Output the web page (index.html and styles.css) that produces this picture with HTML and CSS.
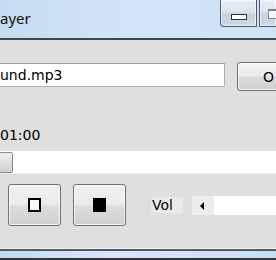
FILE: index.html
```html
<!DOCTYPE html>
<html>
<head>
<meta charset="utf-8">
<link rel="stylesheet" href="styles.css">
</head>
<body>
<div class="window">
  <div class="titlebar">
    <span class="title">ayer</span>
    <div class="caption">
      <div class="cbtn cbtn-min"><span class="glyph-min"></span></div>
      <div class="cbtn cbtn-max"><span class="glyph-max"></span></div>
    </div>
  </div>
  <div class="client">
    <div class="file-row">
      <div class="textbox">und.mp3</div>
      <div class="btn btn-open">O</div>
    </div>
    <div class="time">01:00</div>
    <div class="seek"><div class="thumb"></div></div>
    <div class="controls">
      <div class="btn btn-ctl"><span class="sq-hollow"></span></div>
      <div class="btn btn-ctl"><span class="sq-filled"></span></div>
      <span class="vol-label">Vol</span>
      <div class="vol">
        <div class="vol-arrow"><svg width="5" height="8" viewBox="0 0 5 8"><path d="M4 0 L0 4 L4 8 Z" fill="#000"/></svg></div>
      </div>
    </div>
  </div>
  <div class="frame-bottom"></div>
</div>
</body>
</html>
```
FILE: styles.css
```css
html, body {
  margin: 0;
  padding: 0;
  width: 276px;
  height: 260px;
  overflow: hidden;
  background: #dfdfdf;
}
.window {
  width: 276px;
  height: 260px;
  display: flex;
  flex-direction: column;
  overflow: hidden;
  font-family: "DejaVu Sans", sans-serif;
  font-size: 14px;
  color: #000;
}
.titlebar {
  height: 38px;
  flex: none;
  display: flex;
  justify-content: space-between;
  background: linear-gradient(90deg, #c7dcf2 0%, #d3e5f8 50%, #cfe2f6 100%);
  border-bottom: 2px solid #3e4650;
}
.title {
  font-family: "Noto Sans", "Open Sans", sans-serif;
  font-size: 15px;
  line-height: 20px;
  padding-top: 8px;
  color: #111;
}
.caption {
  display: flex;
  align-items: flex-start;
  gap: 2px;
  flex: none;
}
.cbtn {
  height: 27px;
  box-sizing: border-box;
  border: 1px solid #4e5a68;
  border-top: none;
  background: linear-gradient(180deg, #e6edf5 0%, #dce5ef 45%, #c6d2df 55%, #ccd8e5 100%);
  box-shadow: inset 0 0 0 1px rgba(255,255,255,0.6);
  display: flex;
  align-items: flex-start;
  justify-content: center;
  flex: none;
}
.cbtn-min {
  width: 37px;
  border-bottom-left-radius: 4px;
}
.cbtn-max {
  width: 17px;
  justify-content: flex-start;
  padding-left: 8px;
  border-right: none;
}
.glyph-min {
  margin-top: 14px;
  width: 14px;
  height: 4px;
  border: 1px solid #2a3440;
  background: #fff;
}
.glyph-max {
  margin-top: 9px;
  width: 10px;
  height: 7px;
  flex: none;
  border: 1px solid #7a8694;
  border-top-width: 2px;
  background: #f4f7fa;
}
.client {
  flex: 1;
  background: #dfdfdf;
  display: flex;
  flex-direction: column;
  border-bottom: 1px solid #f2f2f2;
}
.file-row {
  display: flex;
  align-items: flex-start;
  margin-top: 22px;
}
.textbox {
  flex: none;
  margin-top: 1px;
  margin-left: -4px;
  width: 229px;
  height: 24px;
  box-sizing: border-box;
  border: 1px solid #a5b4c4;
  border-top-color: #8fa3b8;
  background: #fff;
  padding-left: 3px;
  line-height: 22px;
  white-space: nowrap;
}
.btn {
  box-sizing: border-box;
  border: 1px solid #707070;
  border-radius: 3px;
  background: linear-gradient(180deg, #f2f2f2 0%, #ebebeb 48%, #dddddd 52%, #cfcfcf 100%);
  box-shadow: inset 0 0 0 1px rgba(255,255,255,0.7);
  display: flex;
  align-items: center;
  flex: none;
}
.btn-open {
  margin-left: 12px;
  width: 60px;
  height: 29px;
  padding-left: 25px;
}
.time {
  margin-top: 36px;
  line-height: 16px;
  height: 16px;
  white-space: nowrap;
}
.seek {
  margin-top: 8px;
  height: 22px;
  background: #fff;
  border-bottom: 1px solid #ececec;
  display: flex;
  align-items: center;
}
.thumb {
  width: 14px;
  height: 21px;
  margin-left: -1px;
  box-sizing: border-box;
  border: 1px solid #8a8a8a;
  border-radius: 2px;
  background: linear-gradient(180deg, #f0f0f0 0%, #e0e0e0 50%, #d0d0d0 100%);
}
.controls {
  display: flex;
  align-items: flex-start;
  margin-top: 10px;
  padding-left: 8px;
}
.btn-ctl {
  width: 53px;
  height: 42px;
  justify-content: center;
  margin-right: 12px;
}
.sq-hollow {
  width: 13px;
  height: 14px;
  box-sizing: border-box;
  border: 2px solid #000;
  background: #fafafa;
}
.sq-filled {
  width: 13px;
  height: 14px;
  background: #000;
}
.vol-label {
  margin-left: 13px;
  margin-top: 13px;
  width: 32px;
  height: 16px;
  line-height: 16px;
  background: #e9e9e9;
  padding-left: 1px;
  box-sizing: border-box;
  flex: none;
}
.vol {
  margin-left: 9px;
  margin-top: 12px;
  flex: 1;
  height: 19px;
  background: #fff;
  display: flex;
}
.vol-arrow {
  width: 22px;
  height: 19px;
  background: #ececec;
  display: flex;
  align-items: center;
  padding-left: 8px;
  box-sizing: border-box;
}
.frame-bottom {
  flex: none;
  height: 11px;
  box-sizing: border-box;
  border-top: 2px solid #555a60;
  border-bottom: 2px solid #2f3338;
  background: linear-gradient(90deg, #c4d9ef 0%, #d6e7f8 40%, #c9ddf2 100%);
}
```
